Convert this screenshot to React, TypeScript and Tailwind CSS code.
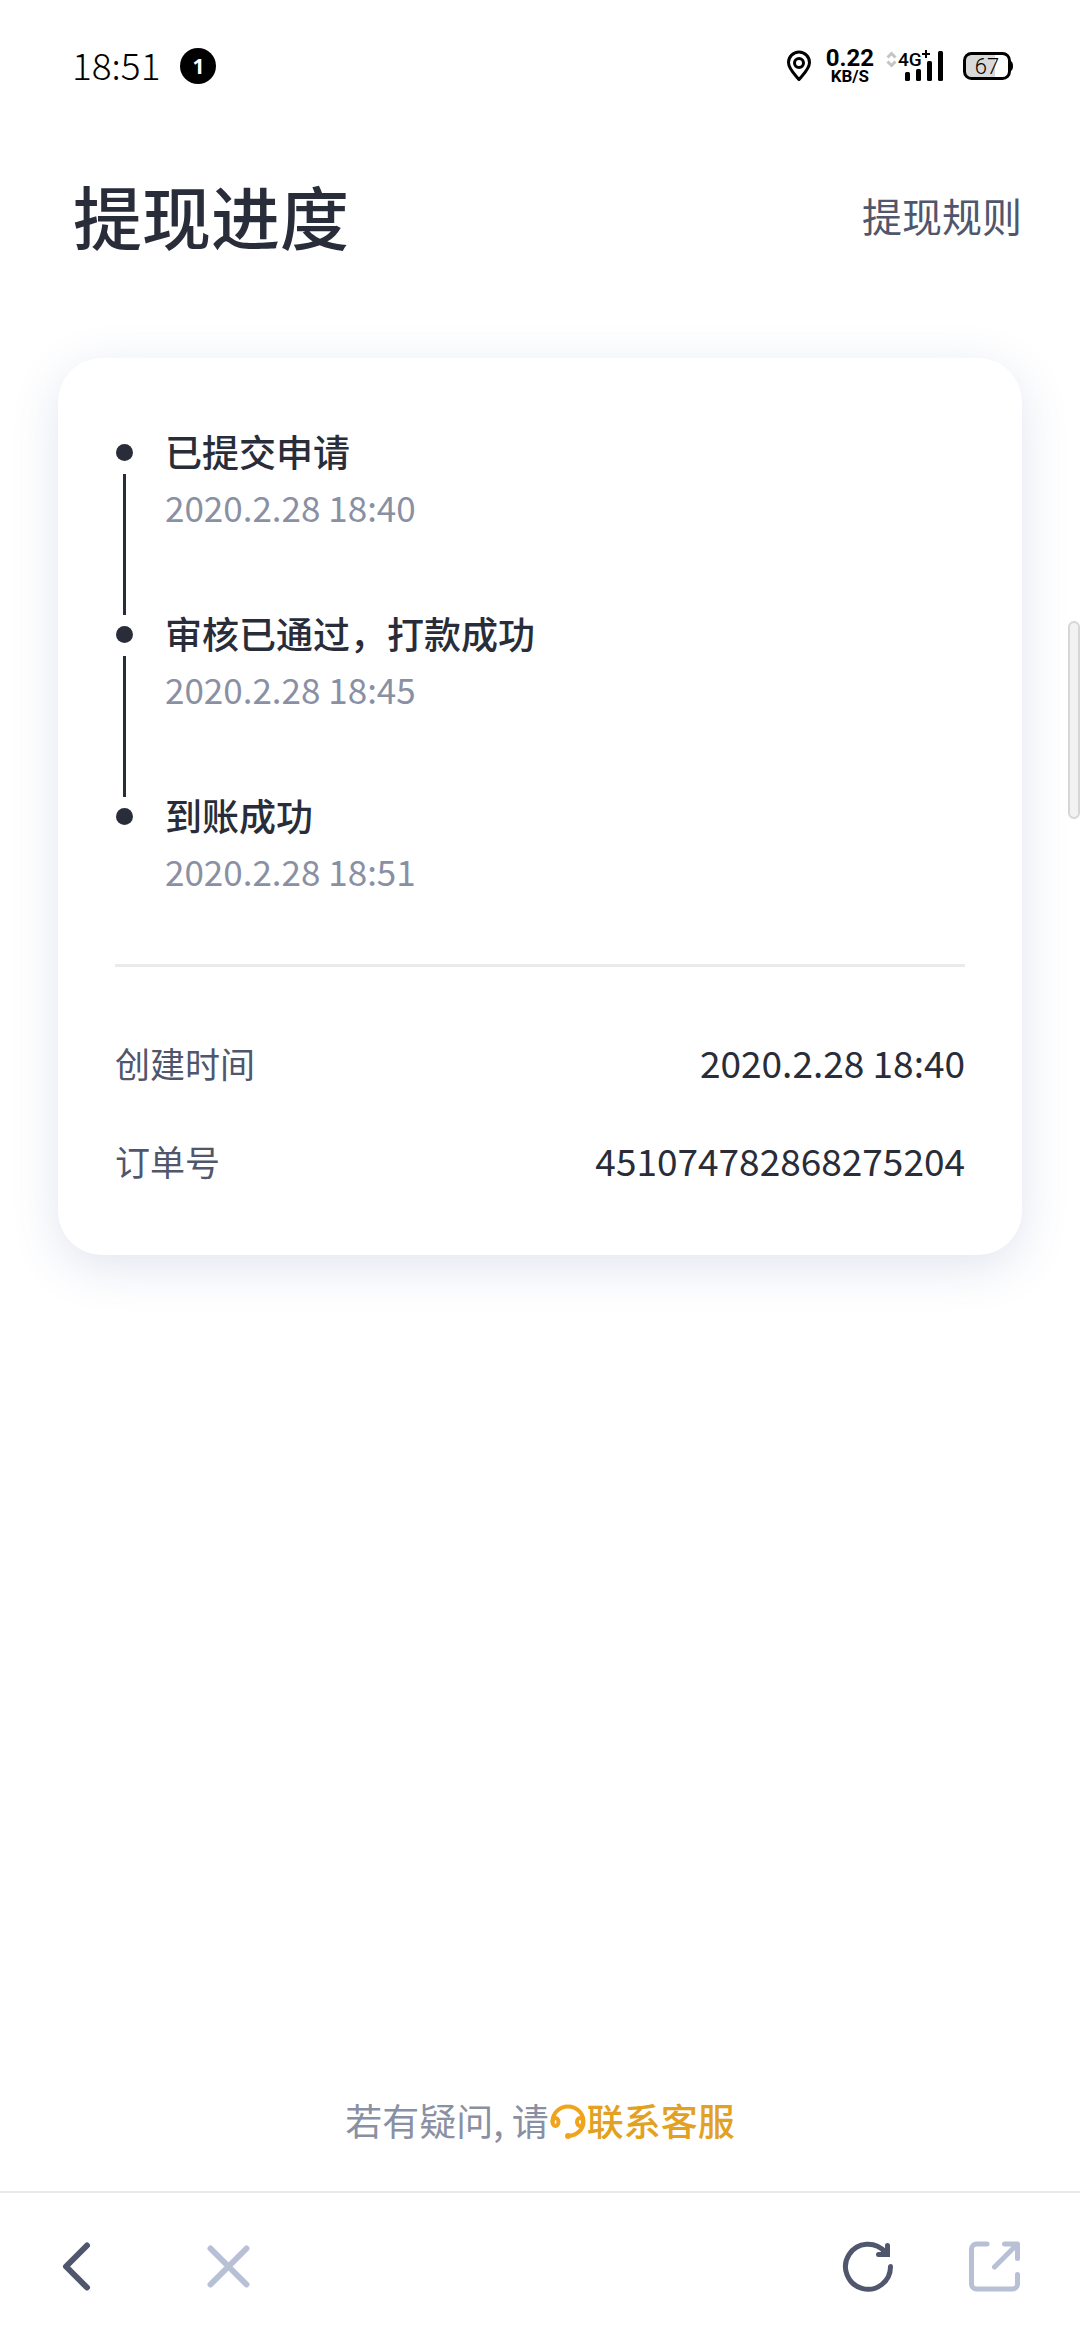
import { FC } from "react";

type Step = { title: string; time: string };

const steps: Step[] = [
  { title: "已提交申请", time: "2020.2.28 18:40" },
  { title: "审核已通过，打款成功", time: "2020.2.28 18:45" },
  { title: "到账成功", time: "2020.2.28 18:51" },
];

const details = [
  { label: "创建时间", value: "2020.2.28 18:40" },
  { label: "订单号", value: "451074782868275204" },
];

const StatusBar: FC = () => (
  <div className="flex h-[132px] items-center justify-between pr-[66px] pl-[72px] text-black">
    <div className="flex items-center gap-5">
      <span className="pb-1 text-[37px] leading-[40px] font-light">18:51</span>
      <span className="flex size-9 items-center justify-center rounded-full bg-black font-['Open_Sans'] text-[21px] leading-none font-bold text-white">
        1
      </span>
    </div>

    <div className="flex items-center">
      <svg width="26" height="32" viewBox="0 0 26 32" fill="none" stroke="#000">
        <path
          d="M13 29.500C9 24.500 2.500 19 2.500 12.500a10.500 10.500 0 0 1 21 0C23.500 19 17 24.500 13 29.500Z"
          strokeWidth="3"
          strokeLinejoin="round"
        />
        <circle cx="13" cy="13" r="4.500" strokeWidth="3" />
      </svg>
      <div className="ml-3.5 flex flex-col items-center font-[Roboto] font-bold">
        <span className="text-[24px] leading-[20px]">0.22</span>
        <span className="text-[17px] leading-[16px]">KB/S</span>
      </div>

      {/* Mobile signal */}
      <svg
        className="ml-3 overflow-visible"
        width="58"
        height="32"
        viewBox="0 0 58 32"
      >
        <g fill="none" stroke="#c4c4c4" strokeWidth="3">
          <path d="M1.500 7.500 5.500 3.500l4 4" />
          <path d="M1.500 11.500l4 4 4-4" />
        </g>
        <text
          x="12"
          y="16"
          fontFamily="Roboto, sans-serif"
          fontSize="19"
          fontWeight="500"
        >
          4G
        </text>
        <path d="M36 4h8M40 0v8" stroke="#000" strokeWidth="2" />
        <rect x="19" y="22" width="5" height="9" rx="1.500" />
        <rect x="30" y="19" width="5" height="12" rx="1.500" />
        <rect x="41" y="11" width="5" height="20" rx="1.500" />
        <rect x="52" y="1" width="5" height="30" rx="1.500" />
      </svg>

      {/* Battery */}
      <svg className="ml-4.5" width="52" height="32" viewBox="0 0 52 32">
        <path d="M4 9a4 4 0 0 1 4-4h25v22H8a4 4 0 0 1-4-4z" fill="#d9d9d9" />
        <rect
          x="2.500"
          y="3.500"
          width="45"
          height="25"
          rx="7"
          fill="none"
          stroke="#000"
          strokeWidth="3"
        />
        <path d="M48 11c2 0 3 2 3 5s-1 5-3 5z" />
        <text
          x="25"
          y="24"
          textAnchor="middle"
          fontFamily="Roboto, sans-serif"
          fontSize="22"
          fontWeight="300"
        >
          67
        </text>
      </svg>
    </div>
  </div>
);

const Timeline: FC = () => (
  <ol>
    {steps.map((step, i) => {
      const last = i === steps.length - 1;
      return (
        <li key={step.time} className="flex gap-8">
          <div className="flex w-[18px] flex-col items-center pt-5">
            <span className="size-[17px] shrink-0 rounded-full bg-[#292d39]" />
            {/* The line runs past its own row, down to the next dot */}
            {!last && (
              <span className="mt-[13px] -mb-3 h-[141px] w-[3px] bg-[#292d39]" />
            )}
          </div>
          <div className={last ? "" : "pb-[72px]"}>
            <h2 className="text-[37px] leading-[55px] font-medium text-[#292d39]">
              {step.title}
            </h2>
            <p className="text-[35px] leading-[55px] text-[#8a90a3]">
              {step.time}
            </p>
          </div>
        </li>
      );
    })}
  </ol>
);

const HeadsetIcon: FC = () => (
  <svg
    width="38"
    height="38"
    viewBox="0 0 38 38"
    fill="none"
    stroke="#f0a31c"
    strokeWidth="4"
    strokeLinecap="round"
  >
    <path d="M3.500 19.500A15.500 15 0 0 1 34.500 19.500C34.500 27.500 28 33.500 19.500 34" />
    <ellipse cx="6.500" cy="20" rx="3" ry="4" />
    <ellipse cx="31" cy="20" rx="3" ry="4" />
    <circle cx="19" cy="34" r="2" fill="#f0a31c" strokeWidth="2" />
  </svg>
);

const BottomBar: FC = () => (
  <nav className="flex h-[149px] items-center justify-between border-t-2 border-[#e9e9ea] px-[56px]">
    <div className="flex gap-[90px]">
      <button type="button" aria-label="返回" className="text-[#50566c]">
        <svg
          width="60"
          height="60"
          viewBox="0 0 60 60"
          fill="none"
          stroke="currentColor"
          strokeWidth="6"
          strokeLinecap="round"
          strokeLinejoin="round"
        >
          <path d="M31 8.500 10 29.500l21 21" />
        </svg>
      </button>
      <button type="button" aria-label="关闭" className="text-[#b8c0d5]">
        <svg
          width="60"
          height="60"
          viewBox="0 0 60 60"
          fill="none"
          stroke="currentColor"
          strokeWidth="6"
          strokeLinecap="round"
        >
          <path d="M4.500 11.500l36 36M40.500 11.500l-36 36" />
        </svg>
      </button>
    </div>
    <div className="flex gap-[66px]">
      <button type="button" aria-label="刷新" className="text-[#50566c]">
        <svg
          width="60"
          height="60"
          viewBox="0 0 60 60"
          fill="none"
          stroke="currentColor"
          strokeWidth="5"
          strokeLinecap="round"
        >
          <path d="M52.500 29.500A22.500 22.500 0 1 1 47 15" />
          <path d="M49.500 8.500v9h-9" />
          <path d="M41 17.500h8.500L45 11.500z" fill="currentColor" stroke="none" />
        </svg>
      </button>
      <button type="button" aria-label="分享" className="text-[#b8c0d5]">
        <svg
          width="60"
          height="60"
          viewBox="0 0 60 60"
          fill="none"
          stroke="currentColor"
          strokeWidth="5"
          strokeLinecap="round"
          strokeLinejoin="round"
        >
          <path d="M23 7H12.500A5 5 0 0 0 7.500 12v35a5 5 0 0 0 5 5h36a5 5 0 0 0 5-5V37.500" />
          <path d="M40.500 7h13V21.500M52.500 8 30.500 30" />
        </svg>
      </button>
    </div>
  </nav>
);

export default function App() {
  return (
    <div className="relative flex min-h-screen flex-col bg-white font-['Noto_Sans_CJK_SC',sans-serif]">
      <StatusBar />

      <header className="flex h-[166px] items-center justify-between pr-[58px] pl-[73px]">
        <h1 className="text-[69px] leading-[84px] font-medium text-[#292d39]">
          提现进度
        </h1>
        <a href="#rules" className="text-[40px] leading-[57px] text-[#50566c]">
          提现规则
        </a>
      </header>

      <main className="mx-[58px] mt-[60px] rounded-[44px] bg-white px-[57px] pt-[66px] pb-[46px] shadow-[0_12px_48px_rgba(70,95,160,0.16)]">
        <Timeline />

        <hr className="mt-[66px] mb-[46px] border-t-[3px] border-[#e9eaec]" />

        <dl>
          {details.map((item) => (
            <div
              key={item.label}
              className="flex h-[98px] items-center justify-between"
            >
              <dt className="text-[35px] leading-[55px] text-[#50566c]">
                {item.label}
              </dt>
              <dd className="text-[37px] leading-[55px] text-[#292d39]">
                {item.value}
              </dd>
            </div>
          ))}
        </dl>
      </main>

      <p className="mt-auto flex items-center justify-center pb-[43px] text-[37px] leading-[55px] text-[#8a90a3]">
        <span>若有疑问, 请</span>
        <a
          href="#service"
          className="flex items-center font-medium text-[#e3a121]"
        >
          <HeadsetIcon />
          联系客服
        </a>
      </p>

      <BottomBar />

      {/* Scroll thumb */}
      <div className="absolute top-[621px] right-0 h-[198px] w-3 rounded-full border-2 border-[#d6d6d6] bg-[#f2f2f2]" />
    </div>
  );
}
